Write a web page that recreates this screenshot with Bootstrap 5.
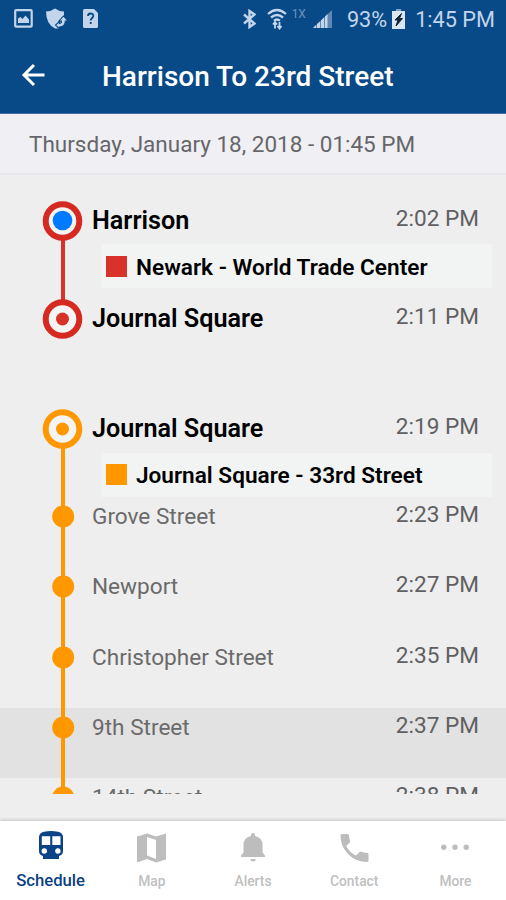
<!DOCTYPE html>
<html lang="en">
<head>
<meta charset="utf-8">
<meta name="viewport" content="width=device-width, initial-scale=1">
<title>Harrison To 23rd Street</title>
<link href="https://cdn.jsdelivr.net/npm/bootstrap@5.3.0/dist/css/bootstrap.min.css" rel="stylesheet">
<style>
  body { font-family: Roboto, "Liberation Sans", sans-serif; background: #eee; height: 900px; color: #000; overflow: hidden; }
  svg { display: block; flex: none; }
  .top-area { background: #084a88; height: 114px; border-bottom: 1px solid #4a6fa8; }
  .status { height: 38px; color: #c3d5ea; font-size: 21.7px; line-height: 38px; padding: 1px 11px 0 14px; white-space: nowrap; }
  .status svg { margin-top: -2px; }
  .status-1x { font-size: 12px; line-height: 12px; color: #6c93bd; margin: 7px 0 0 5px; }
  .ic-shield { margin-left: 13px; }
  .ic-sim { margin-left: 15px; }
  .ic-wifi { margin-left: 11px; }
  .ic-signal { margin-left: 7px; }
  .pct { margin-left: 15px; }
  .ic-battery { margin-left: 5px; }
  .clock { margin-left: 10px; }
  .title-bar { height: 76px; padding-left: 21px; color: #fff; }
  .title-bar svg { margin-top: -2px; }
  .title-bar h1 { font-size: 28px; font-weight: 500; line-height: 30px; margin: 2px 0 0 56px; white-space: nowrap; }
  .date-bar { height: 61px; background: #efeff4; border-bottom: 2px solid #e6e7ea; color: #66666a; font-size: 22.5px; padding: 2px 0 0 29px; white-space: nowrap; }
  .stops { height: 618.5px; padding-top: 25.5px; overflow: hidden; }
  .stop { height: 70.33px; flex: none; }
  .stop-ride { height: 98px; }
  .stop-end { height: 110.5px; }
  .stop-board { height: 88px; }
  .stop-info { padding: 5px 14px 0 0; }
  .stop-name { font-size: 22.6px; line-height: 30px; color: #6a6a6a; white-space: nowrap; }
  .stop-major { font-size: 25.2px; font-weight: 600; color: #000; }
  .stop-time { font-size: 22.6px; line-height: 26px; color: #606062; margin-right: 13px; white-space: nowrap; }
  .route { height: 44px; margin: 8.5px 0 0 9px; padding-left: 5px; background: #f2f4f4; font-size: 22.6px; font-weight: 600; white-space: nowrap; }
  .route-name { padding-top: 3px; }
  .swatch { width: 21px; height: 21px; margin-right: 9px; }
  .swatch-red { background: #d9322a; }
  .swatch-orange { background: #ff9800; }
  .pressed { background: #e2e2e2; }
  .tabs { height: 79px; background: #fff; box-shadow: 0 -1px 3px rgba(0,0,0,.18); }
  .tab-item { color: #c0c0c0; font-size: 13.8px; line-height: 16px; font-weight: 500; padding-top: 11px; }
  .tab-item svg { margin-bottom: 9px; }
  .tab-on { color: #0c3f82; font-size: 16.7px; padding-top: 10px; }
  .tab-on svg { margin-bottom: 12px; }
</style>
<script src="https://cdn.jsdelivr.net/npm/bootstrap@5.3.0/dist/js/bootstrap.bundle.min.js"></script>
</head>
<body class="d-flex flex-column">
<header class="top-area flex-shrink-0">
  <div class="status d-flex align-items-center">
    <svg width="19" height="19" viewBox="0 0 19 19" fill="none" stroke="#c3d5ea"><rect x="1.200" y="1.200" width="16.500" height="16.500" rx="1" stroke-width="2.200"/><path d="M4 14V9.500l2.500-1.500L8.500 10l3-3.500L15 10.500V14z" fill="#c3d5ea" stroke="none"/></svg>
    <svg class="ic-shield" width="22" height="22" viewBox="0 0 22 22"><path d="M0 3.500Q5 3.500 9 .5q4 3 9 3V9l-5 11.500h-4Q0 16 0 3.500z" fill="#c3d5ea"/><path d="M22 13 17.500 8l-4.500 5h2.500c0 1.500-.5 2.500-2 2.500v-2L9.500 17l4 4v-2c4 0 5.800-2 5.800-6z" fill="#c3d5ea" stroke="#084a88" stroke-width="1.100"/></svg>
    <svg class="ic-sim" width="15" height="19" viewBox="0 0 15 19"><path d="M0 1.500Q0 0 1.500 0H11l4 4v13.500q0 1.500-1.500 1.500h-12Q0 19 0 17.500z" fill="#c3d5ea"/><path d="M5 7q0-2.500 2.700-2.500T10.300 7c0 2-2.600 2-2.600 4.500M7.700 13v2" fill="none" stroke="#084a88" stroke-width="1.800"/></svg>
    <svg class="ms-auto" width="13" height="20" viewBox="0 0 13 20" fill="none" stroke="#c3d5ea" stroke-width="2.400"><path d="M1 5.500 11.500 14.500 6.500 18V2L11.500 5.500 1 14.500"/></svg>
    <svg class="ic-wifi" width="20" height="22" viewBox="0 0 20 22" fill="none" stroke="#c3d5ea" stroke-width="2.300"><path d="M1 6Q10-2 19 6M4 9.500q6-5 12 0M7 12.700q3-2.500 6 0"/><path d="M8 20.500V15M12.500 14v5.500M6 16.500 8 14l2 2.500M10.500 18l2 2.500 2-2.500" stroke-width="1.800"/></svg>
    <span class="status-1x align-self-start">1X</span>
    <svg class="ic-signal" width="19" height="18" viewBox="0 0 19 18"><path d="M0 18 19 0v18z" fill="#5f87b4"/><path d="M0 18 3 15v3zM4 18v-4l3-2.500V18zM8 18v-7.500l3-3V18zM12 18V6.500L14.500 4v14z" fill="#c3d5ea"/></svg>
    <span class="pct">93%</span>
    <svg class="ic-battery" width="13" height="20" viewBox="0 0 13 20"><path d="M4 0h5v2H4z" fill="#7f9fc4"/><path d="M0 2h13v18H0z" fill="#dbe6f2"/><path d="M9.500 4.500 3 11h3l-2 6 6.500-7.500H7.500z" fill="#15233a" stroke="#15233a"/></svg>
    <span class="clock">1:45 PM</span>
  </div>
  <div class="title-bar d-flex align-items-center">
    <svg width="25" height="24" viewBox="0 0 25 24" fill="none" stroke="#fff" stroke-width="3"><path d="M23.500 12H3M13 2 3 12l10 10"/></svg>
    <h1>Harrison To 23rd Street</h1>
  </div>
</header>
<div class="date-bar d-flex align-items-center flex-shrink-0">Thursday, January 18, 2018 - 01:45 PM</div>

<main class="stops d-flex flex-column flex-shrink-0">
  <section class="stop stop-ride d-flex">
    <svg width="92" height="98"><path d="M63 38v60" stroke="#d9322a" stroke-width="4"/><circle cx="62.500" cy="20" r="16.800" fill="#f4f4f4" stroke="#d42a22" stroke-width="6"/><circle cx="62.500" cy="19.500" r="9.800" fill="#007aff"/></svg>
    <div class="stop-info flex-grow-1">
      <div class="d-flex justify-content-between"><span class="stop-name stop-major">Harrison</span><span class="stop-time">2:02 PM</span></div>
      <div class="route d-flex align-items-center"><span class="swatch swatch-red"></span><span class="route-name">Newark - World Trade Center</span></div>
    </div>
  </section>
  <section class="stop stop-end d-flex">
    <svg width="92" height="110"><path d="M63 0v5" stroke="#d9322a" stroke-width="4"/><circle cx="62.500" cy="20" r="16.800" fill="#f4f4f4" stroke="#d42a22" stroke-width="6"/><circle cx="62.500" cy="20" r="6.500" fill="#d9322a"/></svg>
    <div class="stop-info flex-grow-1 d-flex justify-content-between align-items-start"><span class="stop-name stop-major">Journal Square</span><span class="stop-time">2:11 PM</span></div>
  </section>
  <section class="stop stop-board d-flex">
    <svg width="92" height="88"><path d="M63 38v50" stroke="#ff9800" stroke-width="4"/><circle cx="62.500" cy="20" r="16.800" fill="#f4f4f4" stroke="#ff9800" stroke-width="6"/><circle cx="62.500" cy="20" r="6.500" fill="#ff9800"/></svg>
    <div class="stop-info flex-grow-1">
      <div class="d-flex justify-content-between"><span class="stop-name stop-major">Journal Square</span><span class="stop-time">2:19 PM</span></div>
      <div class="route d-flex align-items-center"><span class="swatch swatch-orange"></span><span class="route-name">Journal Square - 33rd Street</span></div>
    </div>
  </section>
  <section class="stop d-flex">
    <svg width="92" height="71"><path d="M63 0v71" stroke="#ff9800" stroke-width="4"/><circle cx="63.200" cy="19.500" r="11" fill="#ff9800"/></svg>
    <div class="stop-info flex-grow-1 d-flex justify-content-between align-items-start"><span class="stop-name">Grove Street</span><span class="stop-time">2:23 PM</span></div>
  </section>
  <section class="stop d-flex">
    <svg width="92" height="71"><path d="M63 0v71" stroke="#ff9800" stroke-width="4"/><circle cx="63.200" cy="19.500" r="11" fill="#ff9800"/></svg>
    <div class="stop-info flex-grow-1 d-flex justify-content-between align-items-start"><span class="stop-name">Newport</span><span class="stop-time">2:27 PM</span></div>
  </section>
  <section class="stop d-flex">
    <svg width="92" height="71"><path d="M63 0v71" stroke="#ff9800" stroke-width="4"/><circle cx="63.200" cy="19.500" r="11" fill="#ff9800"/></svg>
    <div class="stop-info flex-grow-1 d-flex justify-content-between align-items-start"><span class="stop-name">Christopher Street</span><span class="stop-time">2:35 PM</span></div>
  </section>
  <section class="stop pressed d-flex">
    <svg width="92" height="71"><path d="M63 0v71" stroke="#ff9800" stroke-width="4"/><circle cx="63.200" cy="19.500" r="11" fill="#ff9800"/></svg>
    <div class="stop-info flex-grow-1 d-flex justify-content-between align-items-start"><span class="stop-name">9th Street</span><span class="stop-time">2:37 PM</span></div>
  </section>
  <section class="stop d-flex">
    <svg width="92" height="71"><path d="M63 0v71" stroke="#ff9800" stroke-width="4"/><circle cx="63.200" cy="19.500" r="11" fill="#ff9800"/></svg>
    <div class="stop-info flex-grow-1 d-flex justify-content-between align-items-start"><span class="stop-name">14th Street</span><span class="stop-time">2:38 PM</span></div>
  </section>
</main>

<nav class="tabs row g-0 mt-auto flex-shrink-0 text-center">
  <div class="tab-item tab-on col d-flex flex-column align-items-center">
    <svg width="24" height="30" viewBox="0 0 24 30"><path d="M5 .8Q12-.8 19 .8q5 1 5 5.500V20q0 4-4 5v3H4v-3q-4-1-4-5V6.300Q0 1.800 5 .8z" fill="#0c4286"/><path d="M2.800 5.200h8.400V14H2.800zM13.300 5.200h8.200V14h-8.200z" fill="#fff"/><circle cx="5.300" cy="20" r="2.700" fill="#fff"/><circle cx="18.900" cy="20" r="2.700" fill="#fff"/></svg>
    <span>Schedule</span>
  </div>
  <div class="tab-item col d-flex flex-column align-items-center">
    <svg width="29" height="32" viewBox="0 0 29 32"><path d="M0 4.500 10 1.500l9 3L29 1.500v26L19 30.500l-9-3.500L0 30.500z" fill="#bdbdbd"/><path d="M10 5l9 3v19l-9-3.500z" fill="#fff"/></svg>
    <span>Map</span>
  </div>
  <div class="tab-item col d-flex flex-column align-items-center">
    <svg width="26" height="32" viewBox="0 0 26 32" fill="#bdbdbd"><path d="M11 4V3a2 2 0 0 1 4 0v1q7.500 1.500 7.500 9v7.500L25 23.500V25H1v-1.500l2.500-3V13Q3.500 5.500 11 4zM10.300 27h5.400q-.5 2.500-2.700 2.500t-2.700-2.500z"/></svg>
    <span>Alerts</span>
  </div>
  <div class="tab-item col d-flex flex-column align-items-center">
    <svg width="29" height="32" viewBox="0 0 29 32" fill="#bdbdbd"><path d="M2 2h5.500q1.500 0 1.500 1.500 0 3 1 5.500.3 1-.4 1.700L6.200 14q3.300 6.500 9.800 9.600l3.500-3.500q.7-.7 1.700-.4 2.700 1 5.600 1Q28.500 20.700 28.500 22v6.500q0 1.500-1.500 1.500Q16 30 8.300 22.200.5 14.500.5 3.500.5 2 2 2z"/></svg>
    <span>Contact</span>
  </div>
  <div class="tab-item col d-flex flex-column align-items-center">
    <svg width="28" height="32" viewBox="0 0 28 32" fill="#bdbdbd"><circle cx="2.800" cy="15.300" r="2.700"/><circle cx="14" cy="15.300" r="2.700"/><circle cx="25.200" cy="15.300" r="2.700"/></svg>
    <span>More</span>
  </div>
</nav>
</body>
</html>
